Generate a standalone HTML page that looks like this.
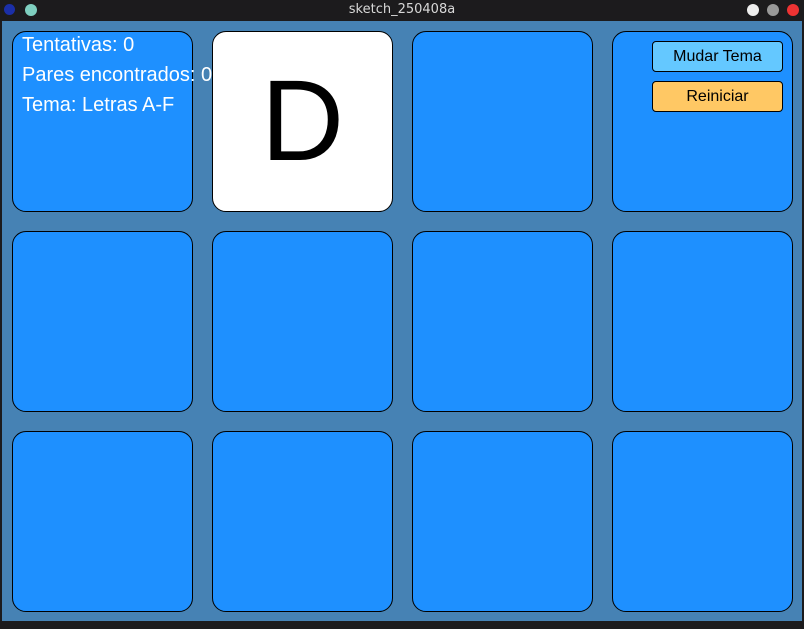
<!DOCTYPE html>
<html><head><meta charset="utf-8"><style>
*{margin:0;padding:0;box-sizing:border-box}
body{width:804px;height:629px;background:#1c1b1d;position:relative;overflow:hidden;font-family:"Liberation Sans",sans-serif}
.tb{position:absolute;left:0;top:0;width:804px;height:21px;background:#1c1b1d;color:#d8d8d8;font-size:13px;text-align:center;line-height:20px;font-family:"DejaVu Sans","Liberation Sans",sans-serif}
.dot{position:absolute;top:4px;width:12px;height:12px;border-radius:50%}
.cv{position:absolute;left:2px;top:21px;width:800px;height:600px;background:#4682b4}
.c{position:absolute;width:181px;height:181px;background:#1e90ff;border:1px solid #000;border-radius:14px}
.w{background:#fff;font-size:115px;text-align:center;line-height:178px;color:#000}
.t{position:absolute;left:20px;color:#fff;font-size:20px;white-space:nowrap}
.b{position:absolute;left:650px;width:131px;height:31px;border:1px solid #000;border-radius:4px;font-size:16px;text-align:center;line-height:29px;color:#000}
</style></head><body>
<div class="tb">sketch_250408a
<div class="dot" style="left:4px;background:#1b2fa8;width:11px;height:11px"></div>
<div class="dot" style="left:25px;background:#7fcfc0"></div>
<div class="dot" style="left:747px;background:#eee"></div>
<div class="dot" style="left:767px;background:#999"></div>
<div class="dot" style="left:787px;background:#e33"></div>
</div>
<div class="cv">
<div class="c" style="left:10px;top:10px"></div>
<div class="t" style="top:13px">Tentativas: 0</div>
<div class="t" style="top:43px">Pares encontrados: 0</div>
<div class="t" style="top:73px">Tema: Letras A-F</div>
<div class="c w" style="left:210px;top:10px">D</div>
<div class="c" style="left:410px;top:10px"></div>
<div class="c" style="left:610px;top:10px"></div>
<div class="c" style="left:10px;top:210px"></div>
<div class="c" style="left:210px;top:210px"></div>
<div class="c" style="left:410px;top:210px"></div>
<div class="c" style="left:610px;top:210px"></div>
<div class="c" style="left:10px;top:410px"></div>
<div class="c" style="left:210px;top:410px"></div>
<div class="c" style="left:410px;top:410px"></div>
<div class="c" style="left:610px;top:410px"></div>
<div class="b" style="top:20px;background:#64c8ff">Mudar Tema</div>
<div class="b" style="top:60px;background:#ffc864">Reiniciar</div>
</div>
</body></html>
